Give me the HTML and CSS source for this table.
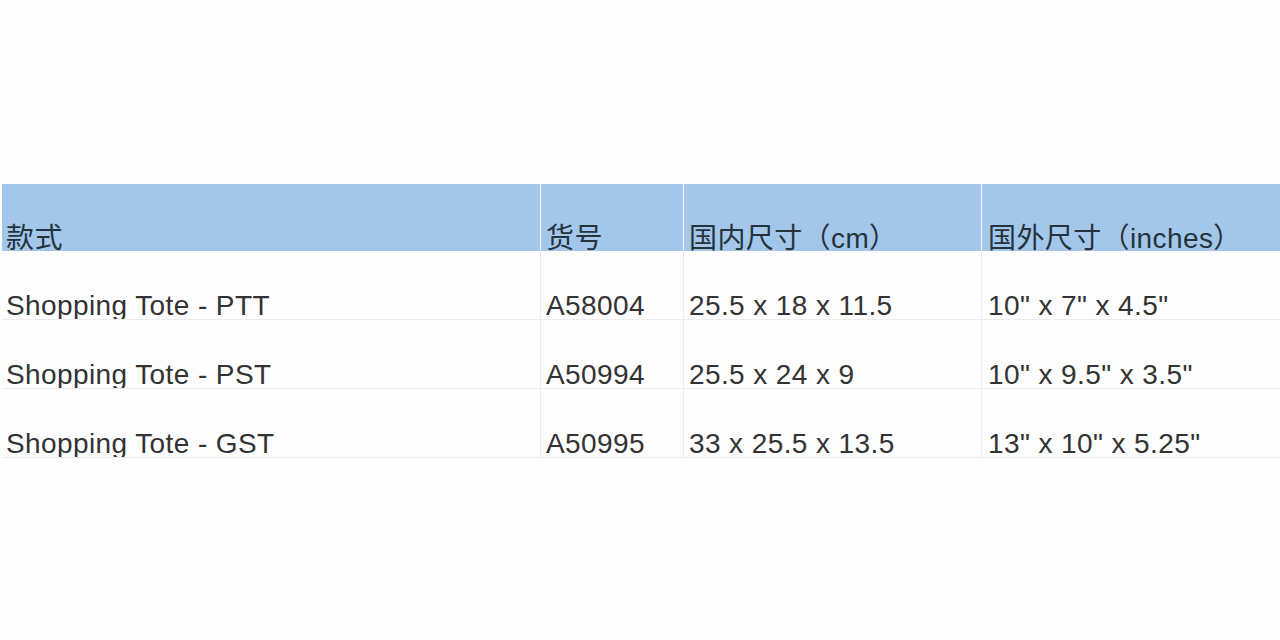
FILE: index.html
```html
<!DOCTYPE html>
<html>
<head>
<meta charset="utf-8">
<link rel="stylesheet" href="styles.css">
</head>
<body>
<div class="sheet">
  <div class="row head">
    <div class="cell c1"><span>款式</span></div>
    <div class="cell c2"><span>货号</span></div>
    <div class="cell c3"><span>国内尺寸（cm）</span></div>
    <div class="cell c4"><span>国外尺寸（inches）</span></div>
  </div>
  <div class="row">
    <div class="cell c1"><span>Shopping Tote - PTT</span></div>
    <div class="cell c2"><span>A58004</span></div>
    <div class="cell c3"><span>25.5 x 18 x 11.5</span></div>
    <div class="cell c4"><span>10" x 7" x 4.5"</span></div>
  </div>
  <div class="row">
    <div class="cell c1"><span>Shopping Tote - PST</span></div>
    <div class="cell c2"><span>A50994</span></div>
    <div class="cell c3"><span>25.5 x 24 x 9</span></div>
    <div class="cell c4"><span>10" x 9.5" x 3.5"</span></div>
  </div>
  <div class="row">
    <div class="cell c1"><span>Shopping Tote - GST</span></div>
    <div class="cell c2"><span>A50995</span></div>
    <div class="cell c3"><span>33 x 25.5 x 13.5</span></div>
    <div class="cell c4"><span>13" x 10" x 5.25"</span></div>
  </div>
</div>
</body>
</html>
```
FILE: styles.css
```css
html, body {
  margin: 0;
  padding: 0;
  background: #fdfdfd;
}
body {
  width: 1280px;
  height: 640px;
  overflow: hidden;
  font-family: "Liberation Sans", "Noto Sans CJK SC", sans-serif;
  font-size: 28px;
  color: #333333;
}
.sheet {
  margin-top: 184px;
  margin-left: 2px;
}
.row {
  display: grid;
  grid-template-columns: 539px 143px 298px 298px;
  height: 68px;
  border-bottom: 1px solid #ececec;
}
.row.head {
  height: 67px;
  background: #a3c7ea;
  border-bottom: none;
}
.cell {
  display: flex;
  align-items: flex-end;
  overflow: hidden;
  padding-left: 4px;
  border-right: 1px solid #ececec;
}
.head .cell {
  border-right: 1px solid #f2f6fb;
  color: #26323c;
}
.cell span {
  line-height: 28px;
  margin-bottom: -1px;
  white-space: nowrap;
  letter-spacing: 0.4px;
}
.head .cell span {
  margin-bottom: -2px;
}
.c2, .c3 { padding-left: 5px; }
.c4 { padding-left: 6px; border-right: none; }
.head .c4 { border-right: none; }
```
